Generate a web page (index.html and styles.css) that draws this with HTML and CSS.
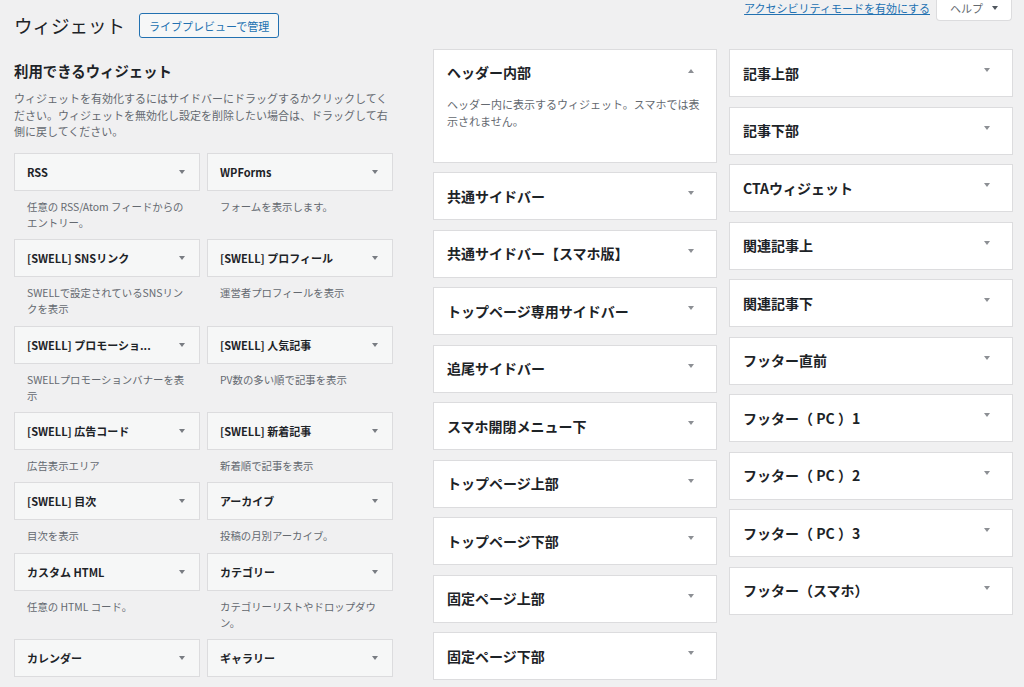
FILE: index.html
```html
<!DOCTYPE html>
<html lang="ja">
<head>
<meta charset="utf-8">
<title>ウィジェット</title>
<link rel="stylesheet" href="styles.css">
</head>
<body>
<div class="wrap">
  <header class="top">
    <div class="title-group">
      <h1 class="page-title">ウィジェット</h1>
      <a class="btn" href="#">ライブプレビューで管理</a>
    </div>
    <div class="screen-links">
      <a class="a11y" href="#">アクセシビリティモードを有効にする</a>
      <button class="help" type="button">ヘルプ <span class="caret"></span></button>
    </div>
  </header>

  <main class="columns">
    <section class="available">
      <h2 class="section-title">利用できるウィジェット</h2>
      <p class="intro">ウィジェットを有効化するにはサイドバーにドラッグするかクリックしてください。ウィジェットを無効化し設定を削除したい場合は、ドラッグして右側に戻してください。</p>
      <div class="widget-grid">
        <div class="widget"><div class="widget-top"><span>RSS</span><span class="arrow"></span></div><div class="widget-desc">任意の RSS/Atom フィードからの<br>エントリー。</div></div>
        <div class="widget"><div class="widget-top"><span>WPForms</span><span class="arrow"></span></div><div class="widget-desc">フォームを表示します。</div></div>
        <div class="widget"><div class="widget-top"><span>[SWELL] SNSリンク</span><span class="arrow"></span></div><div class="widget-desc">SWELLで設定されているSNSリン<br>クを表示</div></div>
        <div class="widget"><div class="widget-top"><span>[SWELL] プロフィール</span><span class="arrow"></span></div><div class="widget-desc">運営者プロフィールを表示</div></div>
        <div class="widget"><div class="widget-top"><span>[SWELL] プロモーショ...</span><span class="arrow"></span></div><div class="widget-desc">SWELLプロモーションバナーを表<br>示</div></div>
        <div class="widget"><div class="widget-top"><span>[SWELL] 人気記事</span><span class="arrow"></span></div><div class="widget-desc">PV数の多い順で記事を表示</div></div>
        <div class="widget"><div class="widget-top"><span>[SWELL] 広告コード</span><span class="arrow"></span></div><div class="widget-desc">広告表示エリア</div></div>
        <div class="widget"><div class="widget-top"><span>[SWELL] 新着記事</span><span class="arrow"></span></div><div class="widget-desc">新着順で記事を表示</div></div>
        <div class="widget"><div class="widget-top"><span>[SWELL] 目次</span><span class="arrow"></span></div><div class="widget-desc">目次を表示</div></div>
        <div class="widget"><div class="widget-top"><span>アーカイブ</span><span class="arrow"></span></div><div class="widget-desc">投稿の月別アーカイブ。</div></div>
        <div class="widget"><div class="widget-top"><span>カスタム HTML</span><span class="arrow"></span></div><div class="widget-desc">任意の HTML コード。</div></div>
        <div class="widget"><div class="widget-top"><span>カテゴリー</span><span class="arrow"></span></div><div class="widget-desc">カテゴリーリストやドロップダウ<br>ン。</div></div>
        <div class="widget"><div class="widget-top"><span>カレンダー</span><span class="arrow"></span></div></div>
        <div class="widget"><div class="widget-top"><span>ギャラリー</span><span class="arrow"></span></div></div>
      </div>
    </section>

    <section class="sidebars sidebars-mid">
      <div class="sb open">
        <div class="sb-head"><span class="sb-title">ヘッダー内部</span><span class="arrow up"></span></div>
        <div class="sb-desc">ヘッダー内に表示するウィジェット。スマホでは表示されません。</div>
      </div>
      <div class="sb"><div class="sb-head"><span class="sb-title">共通サイドバー</span><span class="arrow"></span></div></div>
      <div class="sb"><div class="sb-head"><span class="sb-title">共通サイドバー【スマホ版】</span><span class="arrow"></span></div></div>
      <div class="sb"><div class="sb-head"><span class="sb-title">トップページ専用サイドバー</span><span class="arrow"></span></div></div>
      <div class="sb"><div class="sb-head"><span class="sb-title">追尾サイドバー</span><span class="arrow"></span></div></div>
      <div class="sb"><div class="sb-head"><span class="sb-title">スマホ開閉メニュー下</span><span class="arrow"></span></div></div>
      <div class="sb"><div class="sb-head"><span class="sb-title">トップページ上部</span><span class="arrow"></span></div></div>
      <div class="sb"><div class="sb-head"><span class="sb-title">トップページ下部</span><span class="arrow"></span></div></div>
      <div class="sb"><div class="sb-head"><span class="sb-title">固定ページ上部</span><span class="arrow"></span></div></div>
      <div class="sb"><div class="sb-head"><span class="sb-title">固定ページ下部</span><span class="arrow"></span></div></div>
    </section>

    <section class="sidebars sidebars-right">
      <div class="sb"><div class="sb-head"><span class="sb-title">記事上部</span><span class="arrow"></span></div></div>
      <div class="sb"><div class="sb-head"><span class="sb-title">記事下部</span><span class="arrow"></span></div></div>
      <div class="sb"><div class="sb-head"><span class="sb-title">CTAウィジェット</span><span class="arrow"></span></div></div>
      <div class="sb"><div class="sb-head"><span class="sb-title">関連記事上</span><span class="arrow"></span></div></div>
      <div class="sb"><div class="sb-head"><span class="sb-title">関連記事下</span><span class="arrow"></span></div></div>
      <div class="sb"><div class="sb-head"><span class="sb-title">フッター直前</span><span class="arrow"></span></div></div>
      <div class="sb"><div class="sb-head"><span class="sb-title">フッター（ PC ）1</span><span class="arrow"></span></div></div>
      <div class="sb"><div class="sb-head"><span class="sb-title">フッター（ PC ）2</span><span class="arrow"></span></div></div>
      <div class="sb"><div class="sb-head"><span class="sb-title">フッター（ PC ）3</span><span class="arrow"></span></div></div>
      <div class="sb"><div class="sb-head"><span class="sb-title">フッター（スマホ）</span><span class="arrow"></span></div></div>
    </section>
  </main>
</div>
</body>
</html>
```

FILE: styles.css
```css
html, body {
  margin: 0;
  padding: 0;
}

body {
  background: #f0f0f1;
  color: #1d2327;
  font-family: "Noto Sans CJK JP", "Noto Sans", sans-serif;
  overflow: hidden;
}

.wrap {
  padding: 0 11px 0 14px;
}

/* ---------- top row ---------- */
.top {
  display: flex;
  justify-content: space-between;
  align-items: flex-start;
}

.title-group {
  display: flex;
  align-items: center;
  gap: 14px;
  margin-top: 13px;
}

.page-title {
  margin: 0;
  font-size: 18.5px;
  font-weight: 400;
  line-height: 25px;
  color: #1d2327;
}

.btn {
  display: inline-flex;
  align-items: center;
  height: 25px;
  box-sizing: border-box;
  padding: 0 9px;
  border: 1px solid #2271b1;
  border-radius: 3px;
  background: #f6f7f7;
  color: #2271b1;
  font-size: 11px;
  text-decoration: none;
}

.screen-links {
  display: flex;
  align-items: flex-start;
  gap: 6px;
  margin-right: 1px;
}

.a11y {
  font-size: 11px;
  line-height: 16px;
  color: #2271b1;
  text-decoration: underline;
}

.help {
  display: flex;
  align-items: center;
  gap: 9px;
  height: 21px;
  box-sizing: border-box;
  padding: 0 13px 4px 13px;
  margin: 0;
  border: 1px solid #dcdcde;
  border-top: 0;
  border-radius: 0 0 4px 4px;
  background: #fff;
  color: #646970;
  font-family: inherit;
  font-size: 11px;
  line-height: 16px;
}

.caret {
  width: 0;
  height: 0;
  border-left: 3px solid transparent;
  border-right: 3px solid transparent;
  border-top: 4px solid #50575e;
}

/* ---------- columns ---------- */
.columns {
  display: flex;
  align-items: flex-start;
  margin-top: 11px;
}

.available {
  width: 379px;
  margin-right: 40px;
  padding-top: 12px;
  flex: none;
}

.section-title {
  margin: 0;
  font-size: 14.4px;
  line-height: 20px;
  font-weight: 700;
}

.intro {
  margin: 9px 0 13px;
  font-size: 11px;
  line-height: 16.5px;
  color: #646970;
}

.widget-grid {
  display: grid;
  grid-template-columns: 186px 186px;
  column-gap: 7px;
}

.widget-top {
  height: 38px;
  box-sizing: border-box;
  border: 1px solid #dcdcde;
  background: #f6f7f7;
  display: flex;
  align-items: center;
  justify-content: space-between;
  padding: 0 14px 0 12px;
  font-size: 11px;
  font-weight: 700;
  color: #1d2327;
  white-space: nowrap;
}

.widget-desc {
  padding: 8px 4px 8px 13px;
  font-size: 10.4px;
  line-height: 16.25px;
  color: #646970;
}

.arrow {
  flex: none;
  width: 0;
  height: 0;
  border-left: 3px solid transparent;
  border-right: 3px solid transparent;
  border-top: 4px solid #787c82;
}

.arrow.up {
  border-top: 0;
  border-bottom: 4px solid #787c82;
}

/* ---------- sidebars ---------- */
.sidebars {
  width: 284px;
  flex: none;
}

.sidebars-mid {
  margin-right: 12px;
}

.sb {
  height: 48px;
  box-sizing: border-box;
  border: 1px solid #dcdcde;
  background: #fff;
  margin-bottom: 9.5px;
}

.sb-head {
  height: 46px;
  box-sizing: border-box;
  display: flex;
  align-items: center;
  justify-content: space-between;
  padding: 0 22px 1px 13px;
}

.sb-head .arrow {
  margin-bottom: 5px;
  border-top-color: #8c8f94;
}

.sb-title {
  font-size: 14px;
  line-height: 20px;
  font-weight: 700;
  color: #1d2327;
}

.sidebars-right .sb-title {
  font-weight: 600;
}

.sb.open {
  height: 114px;
  margin-bottom: 9px;
}

.sb.open .sb-head {
  height: 40px;
  padding-top: 4px;
  padding-bottom: 0;
}

.sb.open .arrow.up {
  margin-bottom: 3px;
  border-bottom-color: #8c8f94;
}

.sb-desc {
  padding: 5.5px 13px 0;
  font-size: 11px;
  line-height: 17px;
  color: #646970;
}
```
